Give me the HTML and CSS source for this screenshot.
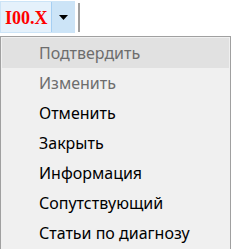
FILE: index.html
```html
<!DOCTYPE html>
<html lang="ru">
<head>
    <meta charset="UTF-8">
    <title>Меню</title>
    <link rel="stylesheet" href="styles.css">
</head>
<body>
    <div class="toolbar">
        <div class="combo">
            <span class="combo-value">I00.X</span>
            <span class="combo-button">
                <svg width="9" height="5" viewBox="0 0 9 5"><path d="M0 0h9L4.5 5z" fill="#000"/></svg>
            </span>
        </div>
        <div class="separator"></div>
    </div>

    <ul class="menu">
        <li class="menu-item disabled hovered">Подтвердить</li>
        <li class="menu-item disabled">Изменить</li>
        <li class="menu-item">Отменить</li>
        <li class="menu-item">Закрыть</li>
        <li class="menu-item">Информация</li>
        <li class="menu-item">Сопутствующий</li>
        <li class="menu-item">Статьи по диагнозу</li>
    </ul>
</body>
</html>
```

FILE: styles.css
```css
body { margin: 0; background: #fff; font-family: Tahoma, "Noto Sans", sans-serif; }
.toolbar { display: flex; align-items: center; height: 34px; }
.combo { display: flex; height: 32px; width: 75px; background: #e5f1fb; border: 1px solid #cce4f7; box-sizing: border-box; }
.combo-value { flex: 1; display: flex; align-items: center; padding: 3px 0 0 4px; font-family: "Liberation Serif", serif; font-weight: bold; font-size: 18px; color: #f00; }
.combo-button { width: 22px; display: flex; align-items: center; justify-content: center; background: #cce4f7; border-left: 1px solid #a6cff3; }
.separator { width: 2px; height: 29px; margin-left: 3px; background: #a0a0a0; }
.menu { list-style: none; margin: 2px 0 0; padding: 1px 1px 2px; width: 231px; box-sizing: border-box; background: #f0f0f0; border: 1px solid #a0a0a0; }
.menu-item { height: 30px; line-height: 31px; padding-left: 37px; font-size: 16px; color: #000; }
.menu-item.disabled { color: #6d6d6d; }
.menu-item.hovered { background: #e1e1e1; }
```
